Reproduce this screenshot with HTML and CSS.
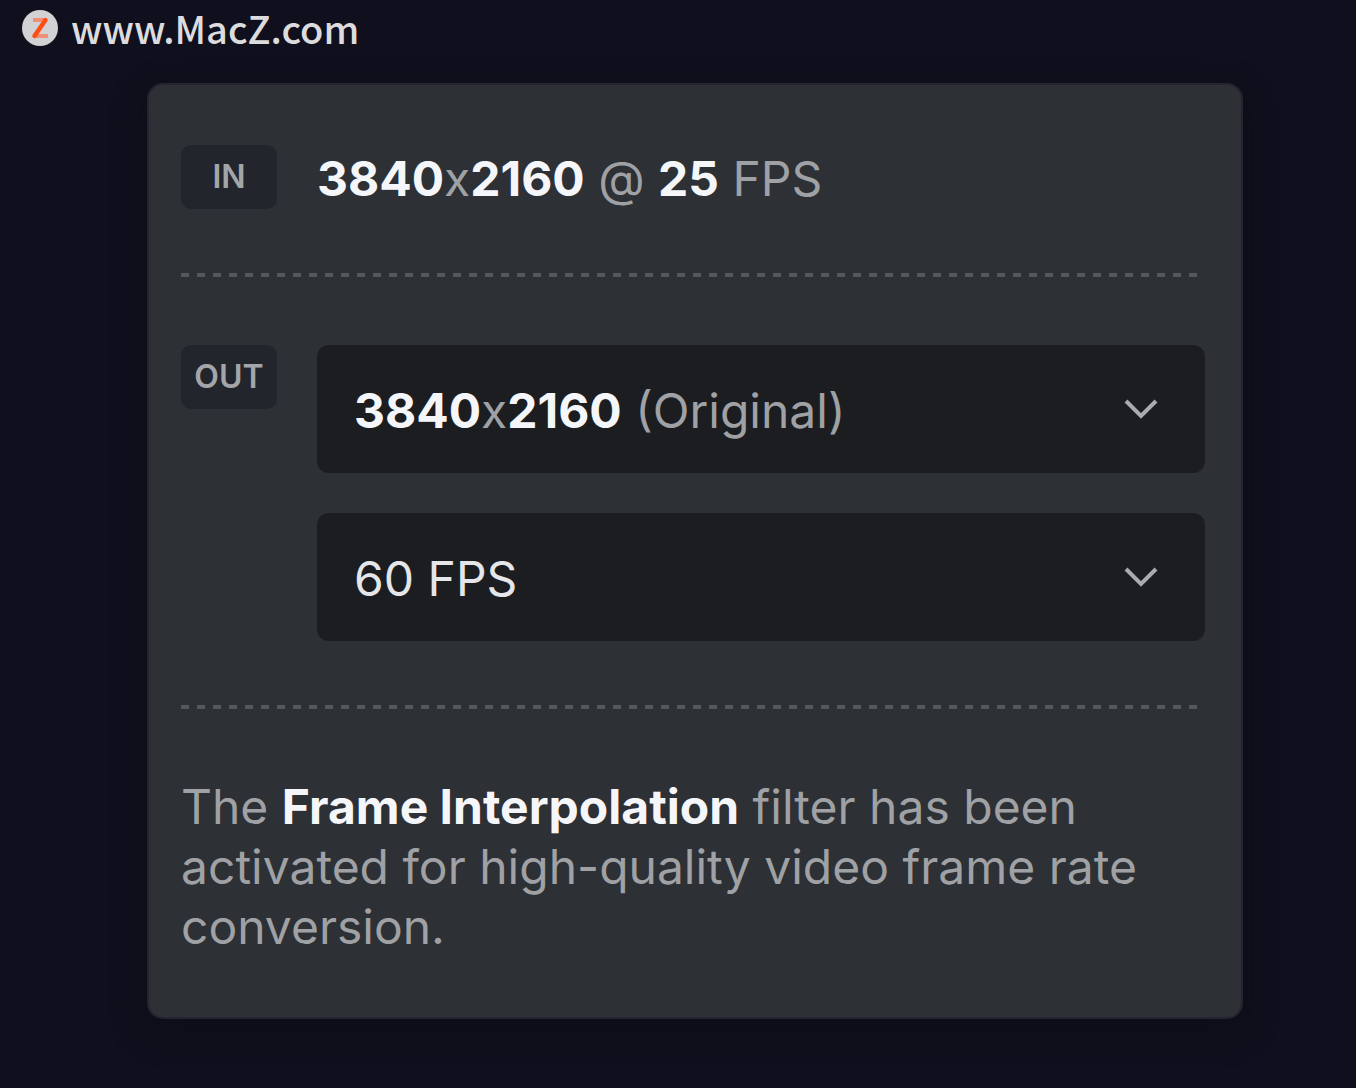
FILE: index.html
```
<!doctype html>
<html lang="en">
<head>
    <meta charset="UTF-8">
    <meta name="viewport" content="width=device-width, initial-scale=1.0">
    <title>Frame Rate Conversion</title>
    <link rel="stylesheet" href="styles.css">
</head>
<body>
    <header class="site-header">
        <a class="brand" href="#">
            <svg class="brand-logo" viewBox="0 0 36 36" aria-hidden="true">
                <circle cx="18" cy="18" r="18" fill="#d2d2d5"/>
                <path d="M11 8h13v4H11zM13 24h13v4H13z" fill="#ee8f76"/>
                <path d="M23.500 10L12.500 26" stroke="#ff4d14" stroke-width="4.500" stroke-linecap="round"/>
            </svg>
            <span>www.MacZ.com</span>
        </a>
    </header>

    <main class="panel">
        <section class="row">
            <span class="badge">IN</span>
            <p class="source"><strong>3840</strong>x<strong>2160</strong> @ <strong>25</strong> FPS</p>
        </section>

        <hr class="divider">

        <section class="row">
            <span class="badge">OUT</span>
            <div class="fields">
                <div class="field">
                    <select class="dropdown" id="resolution" aria-label="Output resolution">
                        <button><selectedcontent></selectedcontent></button>
                        <option value="original" selected><strong>3840</strong>x<strong>2160</strong> (Original)</option>
                    </select>
                    <svg class="chevron" viewBox="0 0 34 22" aria-hidden="true"><path d="M2 3l15 15L32 3"/></svg>
                </div>
                <div class="field">
                    <select class="dropdown dropdown-light" id="fps" aria-label="Output frame rate">
                        <option value="60" selected>60 FPS</option>
                    </select>
                    <svg class="chevron" viewBox="0 0 34 22" aria-hidden="true"><path d="M2 3l15 15L32 3"/></svg>
                </div>
            </div>
        </section>

        <hr class="divider">

        <p class="note">The <strong>Frame Interpolation</strong> filter has been activated for high-quality video frame rate conversion.</p>
    </main>
</body>
</html>
```

FILE: styles.css
```
* {
    box-sizing: border-box;
}

body {
    margin: 0;
    background-color: #100f1d;
    color: #9fa1a5;
    font-family: Inter, "Liberation Sans", sans-serif;
    font-size: 48px;
    line-height: 60px;
    font-optical-sizing: none;
}

p {
    margin: 0;
}

strong {
    color: #f4f6fa;
    font-weight: 700;
}

.site-header {
    padding: 0 22px;
}

.brand {
    display: inline-flex;
    align-items: center;
    gap: 13px;
    color: #dcdcde;
    font-family: "Noto Sans CJK SC", "Noto Sans", sans-serif;
    font-size: 38px;
    font-weight: 500;
    line-height: 55px;
    text-decoration: none;
    vertical-align: top;
}

.brand-logo {
    width: 36px;
    height: 36px;
}

.panel {
    margin: 23px 113px 68px 147px;
    padding: 60px 36px 60px 32px;
    background-color: #2d3034;
    border: 2px solid #242331;
    border-radius: 16px;
    box-shadow: 0 12px 32px rgba(12, 11, 22, 0.5);
}

.row {
    display: flex;
    align-items: flex-start;
    gap: 40px;
}

.badge {
    flex: none;
    width: 96px;
    border-radius: 10px;
    background-color: #22252b;
    color: #a3a5a9;
    font-size: 32px;
    font-weight: 600;
    line-height: 64px;
    text-align: center;
}

.source {
    padding-top: 4px;
}

/* 8px dashes with 8px gaps */
.divider {
    height: 4px;
    margin: 64px 8px 68px 0;
    border: 0;
    background: repeating-linear-gradient(to right, #54575b 0 8px, transparent 8px 16px);
}

.fields {
    flex: 1;
    display: grid;
    gap: 40px;
}

.field {
    display: grid;
    align-items: center;
}

.dropdown,
.chevron {
    grid-area: 1 / 1;
}

.dropdown {
    appearance: none;
    appearance: base-select;
    display: flex;
    align-items: center;
    width: 100%;
    height: 128px;
    padding: 4px 96px 0 37px;
    border: 0;
    border-radius: 12px;
    background-color: #1b1d21;
    color: #9fa1a5;
    font: inherit;
    cursor: pointer;
}

.dropdown:hover {
    background-color: #1e2025;
}

.dropdown::picker-icon {
    display: none;
}

.dropdown-light {
    color: #e4e6ea;
}

.chevron {
    justify-self: end;
    width: 34px;
    height: 22px;
    margin-right: 47px;
    fill: none;
    stroke: #a9abb0;
    stroke-width: 4;
    pointer-events: none;
}

.note {
    padding-right: 20px;
}
```
